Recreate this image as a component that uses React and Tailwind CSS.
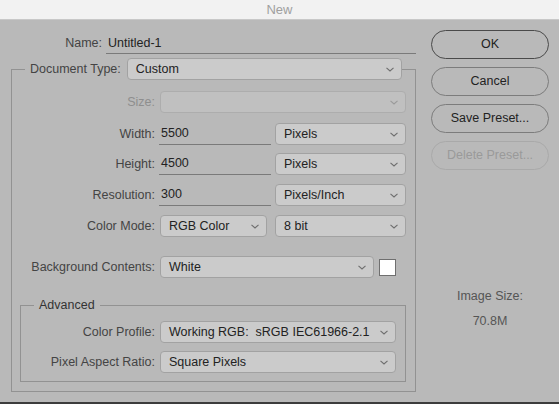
import React from "react";

const Chevron = ({ dim }) => (
  <svg width="8" height="5" viewBox="0 0 8 5" className="shrink-0">
    <polyline
      points="0.5,0.8 4,4 7.5,0.8"
      fill="none"
      stroke={dim ? "#9a9a9a" : "#6e6e6e"}
      strokeWidth="1.1"
    />
  </svg>
);

const Select = ({ value, className = "", disabled }) => (
  <div
    className={
      "h-[22px] flex items-center justify-between rounded-[4px] border pl-[8px] pr-[7px] " +
      (disabled
        ? "border-[#adadad] bg-[#c0c0c0] "
        : "border-[#a2a2a2] bg-[#cbcbcb] text-[#222] ") +
      className
    }
  >
    <span className="whitespace-pre">{value}</span>
    <Chevron dim={disabled} />
  </div>
);

const TextField = ({ value, className = "" }) => (
  <div className={"h-[22px] flex items-center border-b border-[#7a7a7a] pl-[2px] text-[#222] " + className}>
    {value}
  </div>
);

const Label = ({ children, w = "w-[143px]", dim }) => (
  <div className={w + " shrink-0 text-right mr-[5px] " + (dim ? "text-[#8e8e8e]" : "text-[#444]")}>
    {children}
  </div>
);

const Btn = ({ children, primary, disabled }) => (
  <div
    className={
      "w-[118px] h-[29px] rounded-full border flex items-center justify-center " +
      (primary
        ? "border-[#4a4a4a] text-[#222]"
        : disabled
        ? "border-[#a9a9a9] text-[#9a9a9a]"
        : "border-[#7c7c7c] text-[#222]")
    }
  >
    {children}
  </div>
);

export default function App() {
  return (
    <div
      className="w-[559px] h-[404px] flex flex-col overflow-hidden text-[12.5px] leading-[15px]"
      style={{ fontFamily: '"Liberation Sans", Arial, sans-serif' }}
    >
      {/* title bar */}
      <div className="h-[20px] shrink-0 bg-[#f2f2f2] border-b border-[#c8c8c8] flex items-center justify-center text-[13px] text-[#a0a0a0]">
        New
      </div>

      <div className="flex-1 bg-[#b9b9b9] flex">
        {/* left column */}
        <div className="w-[416px] shrink-0 pt-[12px]">
          {/* name */}
          <div className="flex items-center h-[22px]">
            <div className="w-[102px] text-right text-[#444] pt-[1px]">Name:</div>
            <TextField value="Untitled-1" className="ml-[4px] w-[310px] pl-[2px] pt-[1px]" />
          </div>

          <fieldset className="ml-[11px] mt-[4px] w-[405px] border border-[#929292] pb-[9px]">
            <legend className="ml-[13px] pl-[5px]">
              <div className="flex items-center">
                <span className="text-[#444] mr-[6px]">Document Type:</span>
                <Select value="Custom" className="w-[275px]" />
              </div>
            </legend>

            <div className="flex flex-col">
              <div className="flex items-center mt-[11px]">
                <Label dim>Size:</Label>
                <Select value="" disabled className="w-[246px]" />
              </div>
              <div className="flex items-center mt-[10px]">
                <Label>Width:</Label>
                <TextField value="5500" className="-ml-[1px] w-[112px]" />
                <Select value="Pixels" className="ml-[4px] w-[131px]" />
              </div>
              <div className="flex items-center mt-[8px]">
                <Label>Height:</Label>
                <TextField value="4500" className="-ml-[1px] w-[112px]" />
                <Select value="Pixels" className="ml-[4px] w-[131px]" />
              </div>
              <div className="flex items-center mt-[9px]">
                <Label>Resolution:</Label>
                <TextField value="300" className="-ml-[1px] w-[112px]" />
                <Select value="Pixels/Inch" className="ml-[4px] w-[131px]" />
              </div>
              <div className="flex items-center mt-[9px]">
                <Label>Color Mode:</Label>
                <Select value="RGB Color" className="w-[107px]" />
                <Select value="8 bit" className="ml-[8px] w-[131px]" />
              </div>
              <div className="flex items-center mt-[19px]">
                <Label>Background Contents:</Label>
                <Select value="White" className="w-[214px]" />
                <div className="ml-[5px] w-[17px] h-[17px] bg-white border border-[#6f6f6f]" />
              </div>
            </div>

            <fieldset className="ml-[8px] mt-[20px] w-[386px] border border-[#929292] pb-[8px]">
              <legend className="ml-[13px] px-[5px] text-[#333]">Advanced</legend>
              <div className="flex flex-col gap-[8px] mt-[8px]">
                <div className="flex items-center">
                  <Label w="w-[134px]">Color Profile:</Label>
                  <Select value="Working RGB:  sRGB IEC61966-2.1" className="w-[236px]" />
                </div>
                <div className="flex items-center">
                  <Label w="w-[134px]">Pixel Aspect Ratio:</Label>
                  <Select value="Square Pixels" className="w-[236px]" />
                </div>
              </div>
            </fieldset>
          </fieldset>
        </div>

        {/* right column */}
        <div className="ml-[15px] pt-[10px] flex flex-col">
          <div className="flex flex-col gap-[8px]">
            <Btn primary>OK</Btn>
            <Btn>Cancel</Btn>
            <Btn>Save Preset...</Btn>
            <Btn disabled>Delete Preset...</Btn>
          </div>
          <div className="mt-[119px] text-center text-[#555]">Image Size:</div>
          <div className="mt-[10px] text-center text-[#555]">70.8M</div>
        </div>
      </div>

      <div className="h-[2px] shrink-0 bg-[#3c3c3c]" />
    </div>
  );
}
